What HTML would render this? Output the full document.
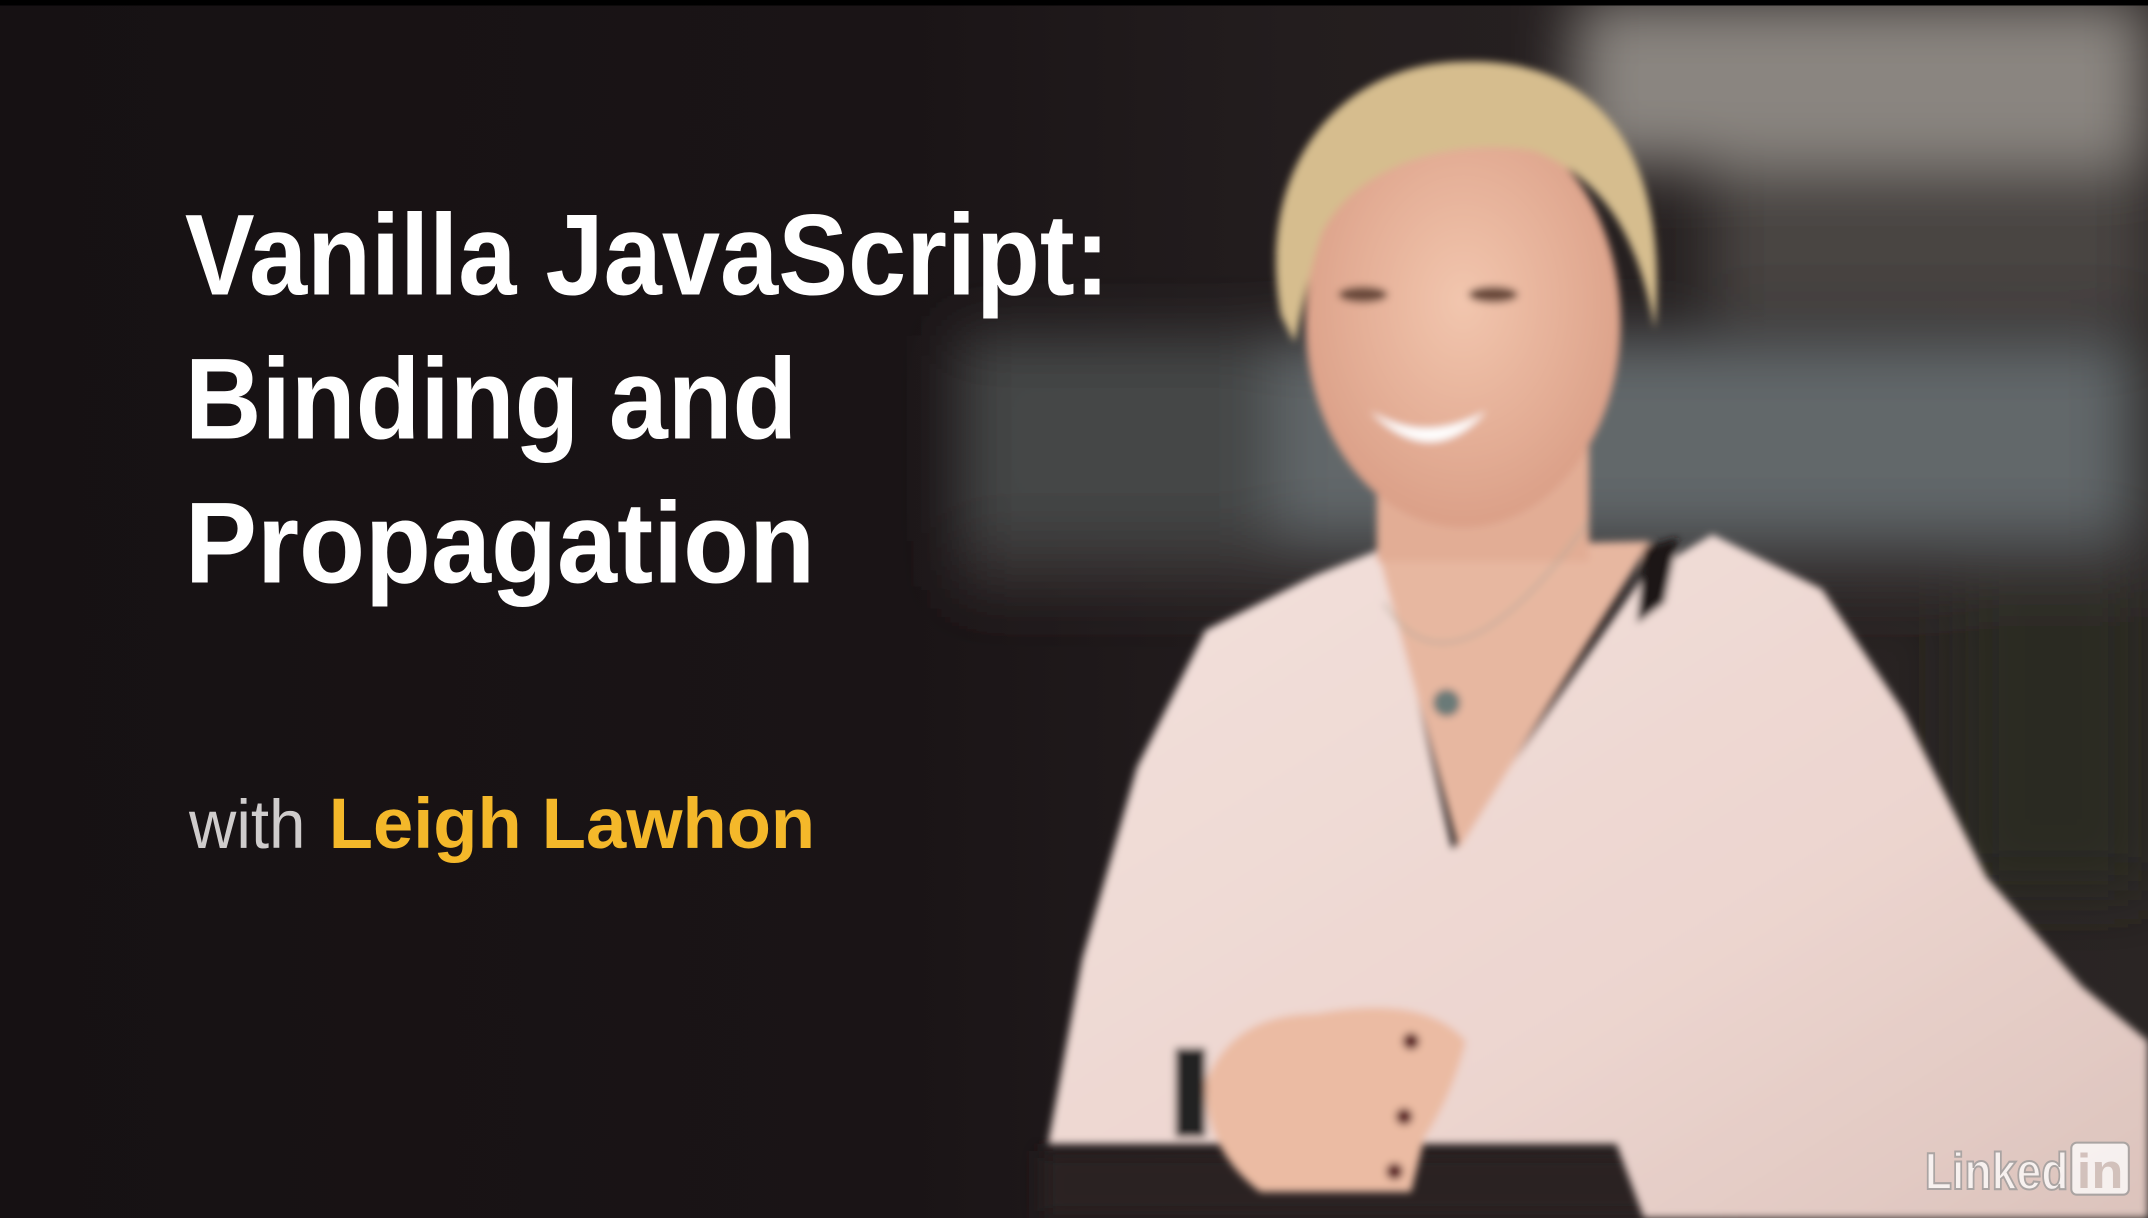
<!DOCTYPE html>
<html><head><meta charset="utf-8"><style>
html,body{margin:0;padding:0;background:#000;overflow:hidden}
svg{display:block}
</style></head><body>
<svg width="2148" height="1218" viewBox="0 0 1568 889" preserveAspectRatio="none" xmlns="http://www.w3.org/2000/svg">
<defs>
<filter id="b8" x="-20%" y="-20%" width="140%" height="140%"><feGaussianBlur stdDeviation="8"/></filter>
<filter id="b20" x="-30%" y="-30%" width="160%" height="160%"><feGaussianBlur stdDeviation="22"/></filter>
<filter id="b3"><feGaussianBlur stdDeviation="3"/></filter>
<linearGradient id="bg" x1="0" x2="1" y1="0" y2="0">
<stop offset="0" stop-color="#161113"/><stop offset="0.42" stop-color="#1a1416"/><stop offset="0.6" stop-color="#231d1e"/><stop offset="1" stop-color="#2a2524"/>
</linearGradient>
<linearGradient id="blouse" x1="0" x2="1" y1="0" y2="1">
<stop offset="0" stop-color="#f3e1dc"/><stop offset="0.6" stop-color="#ecd5cf"/><stop offset="1" stop-color="#dcc3bc"/>
</linearGradient>
<radialGradient id="face" cx="0.5" cy="0.45" r="0.6">
<stop offset="0" stop-color="#f2c6ae"/><stop offset="1" stop-color="#d99c84"/>
</radialGradient>
</defs>
<rect width="1568" height="889" fill="url(#bg)"/>
<g filter="url(#b20)">
<rect x="1150" y="0" width="418" height="120" fill="#8a8580"/>
<rect x="1250" y="120" width="318" height="110" fill="#4a4443"/>
<rect x="700" y="245" width="868" height="150" fill="#444646"/>
<rect x="930" y="250" width="620" height="140" fill="#62686a"/>
<rect x="700" y="400" width="868" height="30" fill="#3a3535"/>
<rect x="1430" y="430" width="138" height="220" fill="#2a2a24"/>
</g>
<rect x="0" y="0" width="1568" height="4" fill="#000"/>
<rect x="760" y="840" width="500" height="49" fill="#2a2222" filter="url(#b8)"/>
<g filter="url(#b3)">
<path d="M765,835 L790,700 L830,560 L880,460 L960,420 L1010,400 L1060,620 L1200,420 L1250,390 L1330,430 L1390,520 L1450,640 L1520,720 L1568,760 L1568,889 L1200,889 L1180,835 Z" fill="url(#blouse)"/>
<path d="M1005,400 L1205,395 L1065,620 Z" fill="#e7b7a0"/>
<path d="M1200,400 L1225,392 L1215,440 L1195,455 Z" fill="#1a1414"/>
<rect x="1005" y="300" width="155" height="110" fill="#e2ad95"/>
<ellipse cx="1068" cy="235" rx="115" ry="150" fill="url(#face)"/>
<path d="M935,230 C915,120 980,45 1070,45 C1165,42 1220,110 1208,240 C1195,170 1170,130 1120,110 C1060,100 990,120 965,170 C955,200 950,230 945,250 Z" fill="#d6bd8e"/>
<path d="M1000,300 Q1040,325 1085,300 Q1045,345 1000,300 Z" fill="#fff"/>
<ellipse cx="995" cy="215" rx="18" ry="6" fill="#6a4a3a"/>
<ellipse cx="1090" cy="215" rx="18" ry="6" fill="#6a4a3a"/>
<path d="M1010,440 Q1060,520 1160,380" fill="none" stroke="#b0a898" stroke-width="1.5"/>
<circle cx="1056" cy="513" r="10" fill="#6b7a78"/>
<path d="M880,790 Q900,740 960,740 Q1040,725 1070,760 Q1060,800 1040,830 L1030,870 L920,870 Q880,840 880,790 Z" fill="#ebbba3"/>
<rect x="858" y="765" width="22" height="65" fill="#222"/>
<circle cx="1030" cy="760" r="6" fill="#5a1a20"/><circle cx="1025" cy="815" r="6" fill="#5a1a20"/><circle cx="1018" cy="855" r="6" fill="#5a1a20"/>
</g>
<!-- text -->
<g font-family="Liberation Sans, sans-serif" font-weight="bold" fill="#fff" font-size="84">
<text x="135" y="215" textLength="675" lengthAdjust="spacingAndGlyphs">Vanilla JavaScript:</text>
<text x="135" y="320" textLength="447" lengthAdjust="spacingAndGlyphs">Binding and</text>
<text x="135" y="425" textLength="460" lengthAdjust="spacingAndGlyphs">Propagation</text>
</g>
<text x="138" y="619" font-family="Liberation Sans, sans-serif" font-size="50" fill="#cfcccc" textLength="85" lengthAdjust="spacingAndGlyphs">with</text>
<text x="240" y="619" font-family="Liberation Sans, sans-serif" font-weight="bold" font-size="52" fill="#f4b82a" textLength="355" lengthAdjust="spacingAndGlyphs">Leigh Lawhon</text>
<g opacity="0.75">
<text x="1405" y="868" font-family="Liberation Sans, sans-serif" font-weight="bold" font-size="38" fill="#fff" stroke="#999" stroke-width="1.5" textLength="105" lengthAdjust="spacingAndGlyphs">Linked</text>
<rect x="1512" y="834" width="42" height="38" rx="4" fill="#fff" stroke="#999" stroke-width="1.5"/>
<text x="1516" y="867" font-family="Liberation Sans, sans-serif" font-weight="bold" font-size="36" fill="#cfc0bb" textLength="34" lengthAdjust="spacingAndGlyphs">in</text>
</g>
</svg>
</body></html>
